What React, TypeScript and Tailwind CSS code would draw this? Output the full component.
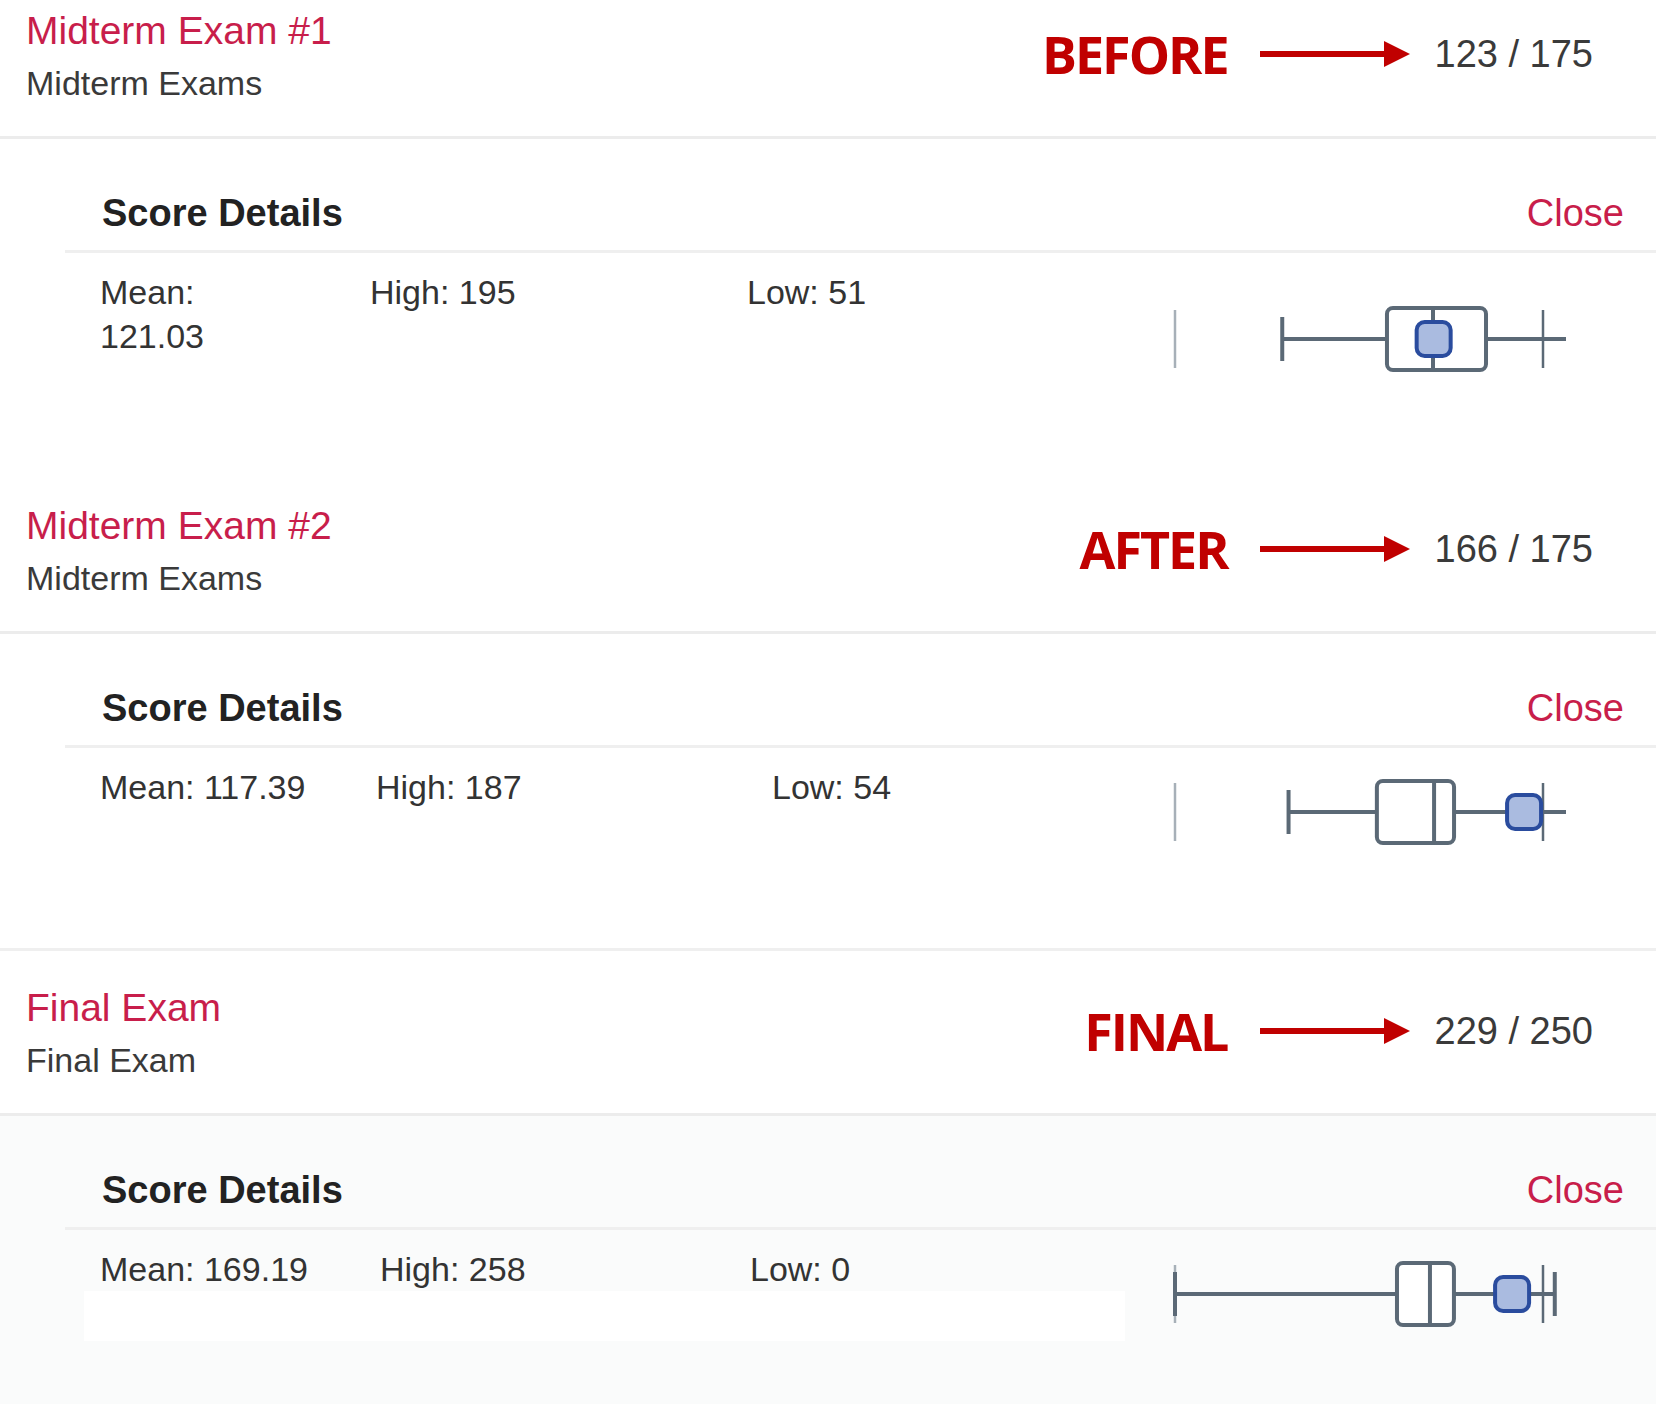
import React from "react";

type Exam = {
  title: string;
  category: string;
  tag: string;
  score: number;
  outOf: number;
  mean: string;
  high: number;
  low: number;
  q1: number;
  median: number;
  q3: number;
  // column template for the Mean / High / Low cells
  cols: string;
  meanWrap: boolean;
  headerTop: string;
  panelBottom: string;
  panel: string;
};

const exams: Exam[] = [
  {
    title: "Midterm Exam #1",
    category: "Midterm Exams",
    tag: "BEFORE",
    score: 123,
    outOf: 175,
    mean: "121.03",
    high: 195,
    low: 51,
    q1: 100.8,
    median: 122.7,
    q3: 147.9,
    cols: "grid-cols-[270px_377px_1fr]",
    meanWrap: true,
    headerTop: "pt-[9px]",
    panelBottom: "pb-[87px]",
    panel: "bg-white",
  },
  {
    title: "Midterm Exam #2",
    category: "Midterm Exams",
    tag: "AFTER",
    score: 166,
    outOf: 175,
    mean: "117.39",
    high: 187,
    low: 54,
    q1: 96,
    median: 123.2,
    q3: 132.7,
    cols: "grid-cols-[276px_396px_1fr]",
    meanWrap: false,
    headerTop: "pt-[9px]",
    panelBottom: "pb-[89px] border-b-[3px] border-[#efefef]",
    panel: "bg-white",
  },
  {
    title: "Final Exam",
    category: "Final Exam",
    tag: "FINAL",
    score: 229,
    outOf: 250,
    mean: "169.19",
    high: 258,
    low: 0,
    q1: 150.8,
    median: 173.2,
    q3: 189.5,
    cols: "grid-cols-[280px_370px_1fr]",
    meanWrap: false,
    headerTop: "pt-[35px]",
    panelBottom: "pb-[63px]",
    panel: "bg-[#fafbfb]",
  },
];

const INK = "#5b6976";

function BoxPlot({ exam }: { exam: Exam }) {
  const x0 = 15;
  const span = 368;
  const x = (v: number) => x0 + (v / exam.outOf) * span;
  const cy = 35;
  const lo = x(exam.low);
  const hi = x(exam.high);
  const q1 = x(exam.q1);
  const q3 = x(exam.q3);
  const med = x(exam.median);
  const me = x(exam.score);

  return (
    <svg width="406" height="70" viewBox="0 0 406 70" className="block overflow-hidden">
      {/* zero and max-points markers */}
      <line x1={x0} y1={6} x2={x0} y2={64} stroke="#a7b0b8" strokeWidth={2.5} />
      <line x1={x0 + span} y1={6} x2={x0 + span} y2={64} stroke={INK} strokeWidth={2.5} />
      {/* whiskers */}
      <line x1={lo} y1={cy} x2={Math.min(hi, 406)} y2={cy} stroke={INK} strokeWidth={4} />
      <line x1={lo} y1={13} x2={lo} y2={57} stroke={INK} strokeWidth={4} />
      <line x1={hi} y1={13} x2={hi} y2={57} stroke={INK} strokeWidth={4} />
      {/* quartile box */}
      <rect x={q1} y={4} width={q3 - q1} height={62} rx={6} fill="white" stroke={INK} strokeWidth={4} />
      <line x1={med} y1={4} x2={med} y2={66} stroke={INK} strokeWidth={4} />
      {/* your score */}
      <rect x={me - 17} y={cy - 17} width={34} height={34} rx={8} fill="#aabbe0" stroke="#2a4c9e" strokeWidth={4} />
    </svg>
  );
}

function Arrow() {
  return (
    <svg width="150" height="28" viewBox="0 0 150 28" className="block">
      <rect x="0" y="11" width="126" height="6" fill="#c00000" />
      <polygon points="124,1 150,14 124,27" fill="#c00000" />
    </svg>
  );
}

function ExamItem({ exam }: { exam: Exam }) {
  return (
    <div>
      {/* grade row */}
      <div
        className={`flex items-center justify-between border-b-[3px] border-[#ececec] pb-[31px] pl-[26px] pr-[63px] ${exam.headerTop}`}
      >
        <div>
          <div className="text-[39px] leading-[44px] text-[#c81e4b]">{exam.title}</div>
          <div className="mt-[8px] text-[34px] leading-[44px] text-[#3a3a3a]">{exam.category}</div>
        </div>
        <div className="flex items-center pb-[6px]">
          <span className="font-['Open_Sans'] text-[52px] font-bold leading-none tracking-[-2px] text-[#c00000]">
            {exam.tag}
          </span>
          <div className="ml-[32px]">
            <Arrow />
          </div>
          <span className="ml-[25px] text-[38px] leading-none text-[#3a3a3a]">
            {exam.score} / {exam.outOf}
          </span>
        </div>
      </div>

      {/* score details panel */}
      <div className={`pl-[65px] pt-[52px] ${exam.panel} ${exam.panelBottom}`}>
        <div className="flex items-center justify-between border-b-[3px] border-[#efefef] pb-[15px] pl-[37px] pr-[32px]">
          <span className="text-[38px] font-bold leading-[44px] text-[#222]">Score Details</span>
          <span className="text-[38px] leading-[44px] text-[#c81e4b]">Close</span>
        </div>
        <div className="mt-[17px] flex items-center">
          <div className="ml-[19px] w-[1041px]">
            <div className={`grid pl-[16px] text-[34px] leading-[44px] text-[#333] ${exam.cols}`}>
              <div className={exam.meanWrap ? "max-w-[150px]" : ""}>Mean: {exam.mean}</div>
              <div>High: {exam.high}</div>
              <div>Low: {exam.low}</div>
            </div>
            <div className="h-[50px] bg-white" />
          </div>
          <div className="ml-[35px]">
            <BoxPlot exam={exam} />
          </div>
        </div>
      </div>
    </div>
  );
}

export default function App() {
  return (
    <div className="h-[1404px] w-[1656px] overflow-hidden bg-white font-['Liberation_Sans',Arial,sans-serif]">
      {exams.map((exam) => (
        <ExamItem key={exam.title} exam={exam} />
      ))}
    </div>
  );
}
